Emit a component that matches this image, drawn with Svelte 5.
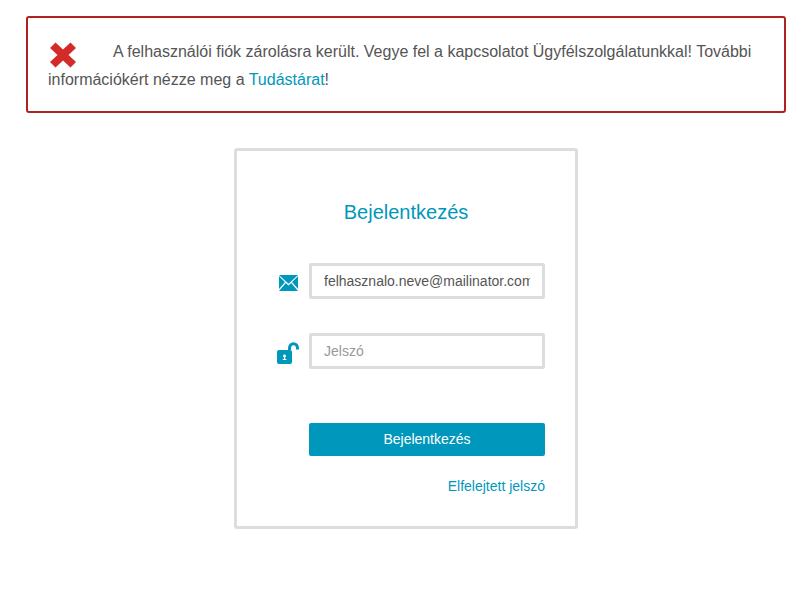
<script>
  let email = 'felhasznalo.neve@mailinator.com';
</script>

<div class="page">
  <div class="alert">
    <p><svg class="x" viewBox="0 0 26 26" width="26" height="26" aria-hidden="true"><path d="M5.5 0.5 L13 7.5 L20.5 0.5 L26 6 L18.5 13 L26 20 L20.5 25.5 L13 18.5 L5.5 25.5 L0 20 L7.5 13 L0 6 Z" fill="#d42a2a" /></svg>A felhasználói fiók zárolásra került. Vegye fel a kapcsolatot Ügyfélszolgálatunkkal! További információkért nézze meg a <a href="#kb">Tudástárat</a>!</p>
  </div>

  <form class="card" onsubmit={(e) => e.preventDefault()}>
    <h1>Bejelentkezés</h1>

    <div class="field">
      <svg class="mail" viewBox="0 0 19 16" width="19" height="16" aria-hidden="true">
        <path d="M0 0 H19 L9.5 8.8 Z" fill="#0097bd" />
        <path d="M0 1.2 L6 7 L0 14 Z M19 1.2 L13 7 L19 14 Z" fill="#0097bd" />
        <path d="M0 16 L6.8 8 L9.5 10.4 L12.2 8 L19 16 Z" fill="#0097bd" />
      </svg>
      <input type="text" bind:value={email} aria-label="E-mail" />
    </div>

    <div class="field pw">
      <svg class="lock" viewBox="0 0 22 22" width="22" height="22" aria-hidden="true">
        <rect x="0" y="8" width="15" height="14" rx="2" fill="#0097bd" />
        <path d="M12.5 8 V6.5 C12.5 0 20.5 0 20.5 6.5 V7.5" fill="none" stroke="#0097bd" stroke-width="3" />
        <circle cx="7.5" cy="14" r="1.4" fill="#fff" />
        <rect x="6.9" y="14" width="1.3" height="3.5" fill="#fff" />
        <rect x="5.7" y="17" width="3.7" height="1" fill="#fff" />
      </svg>
      <input type="password" placeholder="Jelszó" aria-label="Jelszó" />
    </div>

    <button type="submit">Bejelentkezés</button>
    <a class="forgot" href="#forgot">Elfelejtett jelszó</a>
  </form>
</div>

<style>
  :global(body) {
    margin: 0;
    background: #fff;
  }
  .page {
    width: 803px;
    height: 595px;
    box-sizing: border-box;
    padding: 16px 17px 0 26px;
    font-family: "Liberation Sans", Arial, sans-serif;
    overflow: hidden;
  }
  .alert {
    box-sizing: border-box;
    height: 97px;
    border: 2px solid #b02222;
    border-radius: 3px;
    padding: 20px 20px 0;
    font-size: 16px;
    line-height: 28px;
    color: #555;
  }
  .x {
    margin: -4px 37px -4px 2px;
    vertical-align: -7px;
  }
  .alert p {
    margin: 0;
  }
  a {
    color: #0097bd;
    text-decoration: none;
  }
  .card {
    box-sizing: border-box;
    width: 344px;
    height: 381px;
    margin: 35px 0 0 208px;
    border: 3px solid #ddd;
    border-radius: 3px;
    padding: 49px 30px 0;
    display: flex;
    flex-direction: column;
    align-items: flex-end;
  }
  h1 {
    align-self: center;
    margin: 0 0 39px;
    height: 24px;
    font-weight: normal;
    font-size: 20px;
    line-height: 24px;
    color: #0097bd;
  }
  .field {
    width: 100%;
    display: flex;
    align-items: center;
    justify-content: flex-end;
    gap: 11px;
    margin-bottom: 34px;
  }
  .mail {
    margin-top: 4px;
  }
  .lock {
    margin-top: 4px;
  }
  .field.pw {
    gap: 10px;
    margin-bottom: 54px;
  }
  input {
    box-sizing: border-box;
    width: 236px;
    height: 36px;
    border: 3px solid #ddd;
    border-radius: 2px;
    padding: 0 12px;
    outline: none;
    font-family: inherit;
    font-size: 14px;
    color: #555;
    background: #fff;
  }
  input::placeholder {
    color: #999;
    opacity: 1;
  }
  button {
    box-sizing: border-box;
    width: 236px;
    height: 33px;
    border: none;
    border-radius: 2px;
    background: #0097bd;
    color: #fff;
    font-family: inherit;
    font-size: 14px;
    padding: 0 0 2px;
    cursor: pointer;
  }
  .forgot {
    margin-top: 21px;
    font-size: 14px;
    line-height: 18px;
  }
</style>
